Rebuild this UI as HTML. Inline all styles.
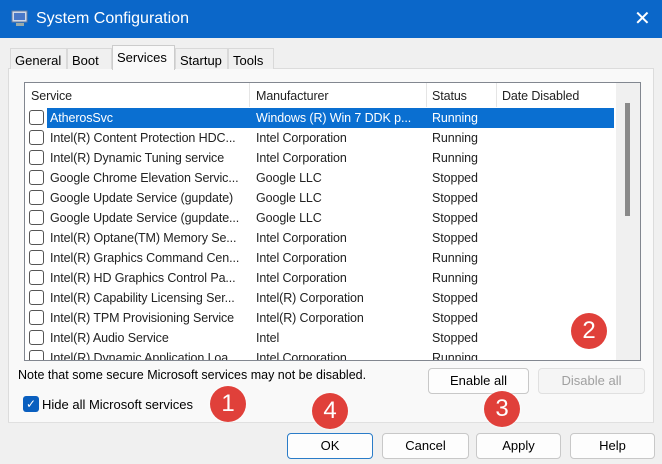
<!DOCTYPE html><html><head><style>
*{box-sizing:border-box}body{margin:0;width:662px;height:464px;overflow:hidden;background:#f0f0f0;font-family:"Liberation Sans",sans-serif;font-size:12.5px;color:#000;position:relative}
.a{position:absolute}
.title{left:0;top:0;width:662px;height:38px;background:#0b67c9;color:#fff;font-size:16px}
.tab{top:48px;height:21px;border:1px solid #d9d9d9;border-bottom:none;background:#f0f0f0;padding:4px 4px;font-size:13px}
.panel{left:8px;top:68px;width:646px;height:355px;border:1px solid #dcdcdc;background:#f9f9f9}
.list{left:24px;top:82px;width:617px;height:279px;border:1px solid #828790;background:#fff;overflow:hidden}
.row{position:absolute;left:0;height:20px;width:590px;line-height:20px;color:#222}
.row span{position:absolute;white-space:nowrap;letter-spacing:-0.1px}
.cb{position:absolute;left:4px;top:2px;width:15px;height:15px;border:1px solid #555;border-radius:3px;background:#fff}
.btn{height:26px;border:1px solid #c8c8c8;border-radius:4px;background:#fdfdfd;text-align:center;line-height:24px;font-size:13px}
.c{width:36px;height:36px;border-radius:50%;background:#e0403a;color:#fff;font-size:24px;text-align:center;line-height:36px;box-shadow:0 0 3px #fff}
</style></head><body>
<div class="a title"><svg class="a" style="left:10px;top:9px" width="20" height="20"><rect x="2" y="2" width="15" height="11" fill="#cfd8e8" stroke="#6a7ca0"/><rect x="4" y="4" width="11" height="7" fill="#4a78c8"/><rect x="6" y="14" width="8" height="3" fill="#9aa"/></svg><span class="a" style="left:36px;top:10px">System Configuration</span><span class="a" style="left:634px;top:6px;font-size:20px;font-weight:lighter">✕</span></div>
<div class="a panel"></div>
<div class="a tab" style="left:10px;width:57px">General</div>
<div class="a tab" style="left:67px;width:45px">Boot</div>
<div class="a tab" style="left:112px;top:45px;height:25px;width:63px;background:#f9f9f9;border-color:#ccc">Services</div>
<div class="a tab" style="left:175px;width:53px">Startup</div>
<div class="a tab" style="left:228px;width:46px">Tools</div>
<div class="a list">
<div class="row" style="top:1px;height:24px;line-height:24px"><span style="left:6px">Service</span><span style="left:231px">Manufacturer</span><span style="left:407px">Status</span><span style="left:477px">Date Disabled</span></div>
<div class="a" style="left:224px;top:0;width:1px;height:24px;background:#e5e5e5"></div>
<div class="a" style="left:401px;top:0;width:1px;height:24px;background:#e5e5e5"></div>
<div class="a" style="left:471px;top:0;width:1px;height:24px;background:#e5e5e5"></div>
<div class="a" style="left:22px;top:25px;width:567px;height:20px;background:#0a6fd1"></div>
<div class="a" style="left:591px;top:0;width:25px;height:279px;background:#f0f0f0"></div>
<div class="a" style="left:600px;top:20px;width:5px;height:113px;background:#8a8a8a"></div>
<div id="rows"></div>
</div>
<script>
var d=[["AtherosSvc","Windows (R) Win 7 DDK p...","Running"],["Intel(R) Content Protection HDC...","Intel Corporation","Running"],["Intel(R) Dynamic Tuning service","Intel Corporation","Running"],["Google Chrome Elevation Servic...","Google LLC","Stopped"],["Google Update Service (gupdate)","Google LLC","Stopped"],["Google Update Service (gupdate...","Google LLC","Stopped"],["Intel(R) Optane(TM) Memory Se...","Intel Corporation","Stopped"],["Intel(R) Graphics Command Cen...","Intel Corporation","Running"],["Intel(R) HD Graphics Control Pa...","Intel Corporation","Running"],["Intel(R) Capability Licensing Ser...","Intel(R) Corporation","Stopped"],["Intel(R) TPM Provisioning Service","Intel(R) Corporation","Stopped"],["Intel(R) Audio Service","Intel","Stopped"],["Intel(R) Dynamic Application Loa...","Intel Corporation","Running"]];
var h="";d.forEach(function(r,i){var s=i==0?"color:#fff":"";h+='<div class="row" style="top:'+(25+i*20)+'px"><div class="cb"></div><span style="left:25px;'+s+'">'+r[0]+'</span><span style="left:231px;'+s+'">'+r[1]+'</span><span style="left:407px;'+s+'">'+r[2]+'</span></div>'});document.getElementById("rows").innerHTML=h;
</script>
<span class="a" style="left:18px;top:368px">Note that some secure Microsoft services may not be disabled.</span>
<div class="a btn" style="left:428px;top:368px;width:101px">Enable all</div>
<div class="a btn" style="left:538px;top:368px;width:107px;color:#a0a0a0;background:#f5f5f5;border-color:#e0e0e0">Disable all</div>
<div class="a" style="left:23px;top:396px;width:16px;height:16px;border-radius:3px;background:#0a5fbf;color:#fff;font-size:12px;text-align:center;line-height:16px">✓</div>
<span class="a" style="left:42px;top:397px;font-size:13px">Hide all Microsoft services</span>
<div class="a" style="left:8px;top:422px;width:646px;height:1px;background:#e0e0e0"></div>
<div class="a btn" style="left:287px;top:433px;width:86px;border-color:#2a7cc8">OK</div>
<div class="a btn" style="left:382px;top:433px;width:87px">Cancel</div>
<div class="a btn" style="left:476px;top:433px;width:85px">Apply</div>
<div class="a btn" style="left:570px;top:433px;width:85px">Help</div>
<div class="a c" style="left:210px;top:386px">1</div>
<div class="a c" style="left:571px;top:313px">2</div>
<div class="a c" style="left:484px;top:391px">3</div>
<div class="a c" style="left:312px;top:393px">4</div>
</body></html>
